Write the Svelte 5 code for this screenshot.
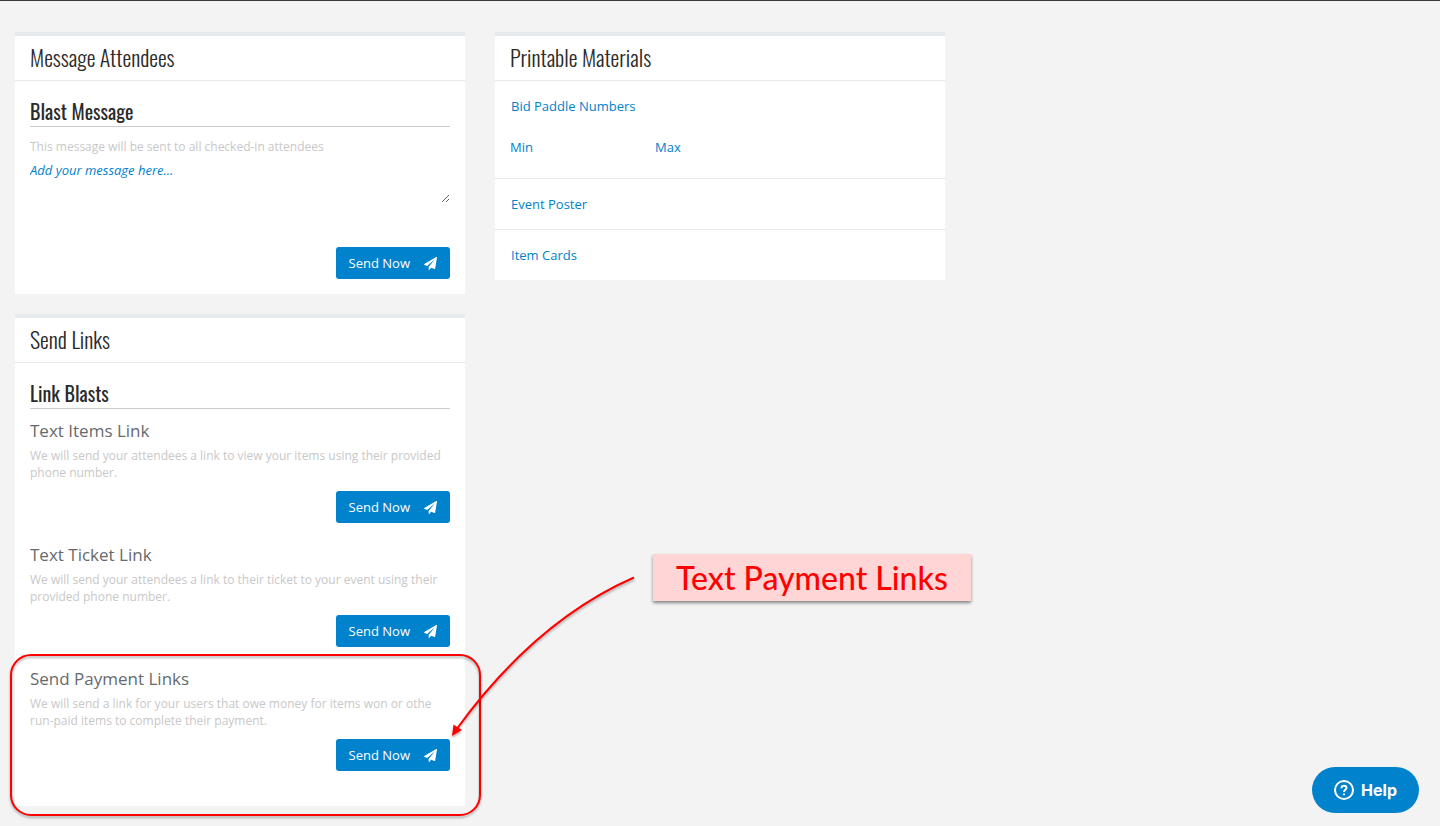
<script>
  let message = ''
  let minPaddle = ''
  let maxPaddle = ''

  const linkBlasts = [
    {
      title: 'Text Items Link',
      description: 'We will send your attendees a link to view your items using their provided phone number.'
    },
    {
      title: 'Text Ticket Link',
      description: 'We will send your attendees a link to their ticket to your event using their provided phone number.'
    },
    {
      title: 'Send Payment Links',
      description: 'We will send a link for your users that owe money for items won or othe run-paid items to complete their payment.',
      callout: 'Text Payment Links'
    }
  ]
</script>

{#snippet sendButton()}
  <button class="btn-send" type="button">
    Send Now
    <svg viewBox="0 0 1792 1792" aria-hidden="true">
      <path d="M1764 11q33 24 27 64l-256 1536q-5 29-32 45-14 8-31 8-11 0-24-5l-453-185-242 295q-18 23-49 23-13 0-22-4-19-7-30.500-23.500t-11.500-36.500v-349l864-1059-1069 925-395-162q-37-14-40-55-2-40 32-59l1664-960q15-9 32-9 20 0 36 11z" />
    </svg>
  </button>
{/snippet}

<main class="page">
  <div class="column">
    <section class="card">
      <h3>Message Attendees</h3>
      <div class="card-body">
        <h4>Blast Message</h4>
        <div class="message">
          <label class="description" for="blast-message">
            This message will be sent to all checked-in attendees
          </label>
          <textarea id="blast-message" placeholder="Add your message here..." bind:value={message}></textarea>
          {@render sendButton()}
        </div>
      </div>
    </section>

    <section class="card">
      <h3>Send Links</h3>
      <div class="card-body">
        <h4>Link Blasts</h4>
        <div class="blasts">
          {#each linkBlasts as blast}
            <div class="blast">
              <h5>{blast.title}</h5>
              <p class="description">{blast.description}</p>
              {@render sendButton()}
              {#if blast.callout}
                <div class="highlight"></div>
                <svg class="arrow" width="190" height="175" viewBox="0 0 190 175" aria-hidden="true">
                  <path class="arrow-line" d="M184 7.500Q85 51 6 160" />
                  <path class="arrow-head" d="M2 166L3.500 154.500L12 160Z" />
                </svg>
                <div class="callout">{blast.callout}</div>
              {/if}
            </div>
          {/each}
        </div>
      </div>
    </section>
  </div>

  <div class="column">
    <section class="card">
      <h3>Printable Materials</h3>
      <div class="row">
        <a href="#paddles">Bid Paddle Numbers</a>
        <div class="range">
          <input type="text" placeholder="Min" aria-label="Min" bind:value={minPaddle} />
          <input type="text" placeholder="Max" aria-label="Max" bind:value={maxPaddle} />
        </div>
      </div>
      <div class="row"><a href="#poster">Event Poster</a></div>
      <div class="row"><a href="#cards">Item Cards</a></div>
    </section>
  </div>
</main>

<button class="help" type="button">
  <svg viewBox="0 0 20 20" aria-hidden="true">
    <circle cx="10" cy="10" r="9" />
    <path d="M7.500 8.200C7.500 6.700 8.600 5.800 10 5.800S12.500 6.700 12.500 8C12.500 9.800 10 9.900 10 11.900" />
    <path d="M10 13.400V15.200" />
  </svg>
  Help
</button>

<style>
  :global(body) {
    margin: 0;
    background: #f3f3f3;
  }

  .page {
    display: grid;
    grid-template-columns: repeat(3, 1fr);
    gap: 30px;
    padding: 31px 15px 20px;
    border-top: 1px solid #3a383b;
    font-family: 'Open Sans', 'Noto Sans', sans-serif;
    font-size: 13px;
    line-height: 20px;
  }

  .column {
    display: flex;
    flex-direction: column;
    gap: 20px;
  }

  .card {
    background: #fff;
    border-top: 4px solid #e7eaec;
  }

  h3,
  h4 {
    margin: 0;
    color: #2a2a2a;
    font-family: Oswald, 'Liberation Sans Narrow', 'Open Sans Condensed', sans-serif;
  }

  h3 {
    padding: 0 15px 2px;
    border-bottom: 1px solid #e7eaec;
    font-size: 22px;
    font-weight: 300;
    line-height: 42px;
  }

  h4 {
    border-bottom: 1px solid #ccc;
    font-size: 20px;
    font-weight: 400;
    line-height: 30px;
  }

  .card-body {
    padding: 15px;
  }

  .message,
  .blast {
    display: flex;
    flex-direction: column;
  }

  .message {
    padding-top: 11px;
  }

  .blasts {
    padding-top: 10px;
  }

  .blast {
    position: relative;
    padding-bottom: 20px;
  }

  h5 {
    margin: 0 0 4px;
    color: #676a6c;
    font-size: 17px;
    font-weight: 400;
    line-height: 24px;
  }

  .description {
    margin: 0;
    color: #c8c8c8;
    font-size: 12px;
    line-height: 17px;
  }

  textarea {
    height: 43px;
    margin: 5px 0 34px;
    padding: 0;
    border: 0;
    outline: 0;
    background: transparent;
    color: #0082cc;
    font: italic 13px/20px 'Open Sans', 'Noto Sans', sans-serif;
    resize: vertical;
  }

  textarea::placeholder,
  input::placeholder {
    color: #0082cc;
    opacity: 1;
  }

  .btn-send {
    display: flex;
    align-items: center;
    align-self: flex-end;
    gap: 14px;
    margin-top: 10px;
    padding: 6px 13px;
    border: 0;
    border-radius: 3px;
    background: #0082cc;
    color: #fff;
    font: 500 13px/20px 'Open Sans', 'Noto Sans', sans-serif;
    cursor: pointer;
  }

  .btn-send svg {
    width: 13px;
    height: 13px;
    fill: currentColor;
  }

  .row {
    padding: 15px;
  }

  .row + .row {
    border-top: 1px solid #e7eaec;
  }

  .row a {
    display: block;
    padding-left: 1px;
    color: #0082cc;
    text-decoration: none;
  }

  .range {
    display: grid;
    grid-template-columns: repeat(3, 1fr);
    gap: 15px;
    padding: 21px 0 6px;
  }

  input {
    min-width: 0;
    height: 20px;
    padding: 0;
    border: 0;
    outline: 0;
    background: transparent;
    color: #0082cc;
    font: 13px/20px 'Open Sans', 'Noto Sans', sans-serif;
  }

  /* annotation over the payment links block */
  .highlight {
    position: absolute;
    top: -13px;
    right: -31px;
    bottom: -25px;
    left: -20px;
    border: 2px solid #f00;
    border-radius: 21px;
    filter: drop-shadow(0 2px 1px rgba(0, 0, 0, 0.3));
    pointer-events: none;
  }

  .arrow {
    position: absolute;
    top: -97px;
    left: 100%;
    filter: drop-shadow(0 2px 1px rgba(0, 0, 0, 0.3));
    pointer-events: none;
  }

  .arrow-line {
    fill: none;
    stroke: #f00;
    stroke-width: 2;
  }

  .arrow-head {
    fill: #f00;
  }

  .callout {
    position: absolute;
    top: -113px;
    left: calc(100% + 203px);
    padding: 0 23px;
    background: #ffd5d5;
    box-shadow: 0 2px 3px rgba(0, 0, 0, 0.45);
    color: #f00;
    font-family: Futura, Lato, sans-serif;
    font-size: 32px;
    font-weight: 500;
    line-height: 47px;
    white-space: nowrap;
  }

  .help {
    position: fixed;
    right: 21px;
    bottom: 13px;
    display: flex;
    align-items: center;
    gap: 7px;
    padding: 12px 22px;
    border: 0;
    border-radius: 23px;
    background: #0082cc;
    color: #fff;
    font: 700 16px/22px Inter, sans-serif;
    cursor: pointer;
  }

  .help svg {
    width: 20px;
    height: 20px;
    fill: none;
    stroke: currentColor;
    stroke-width: 2;
  }
</style>
